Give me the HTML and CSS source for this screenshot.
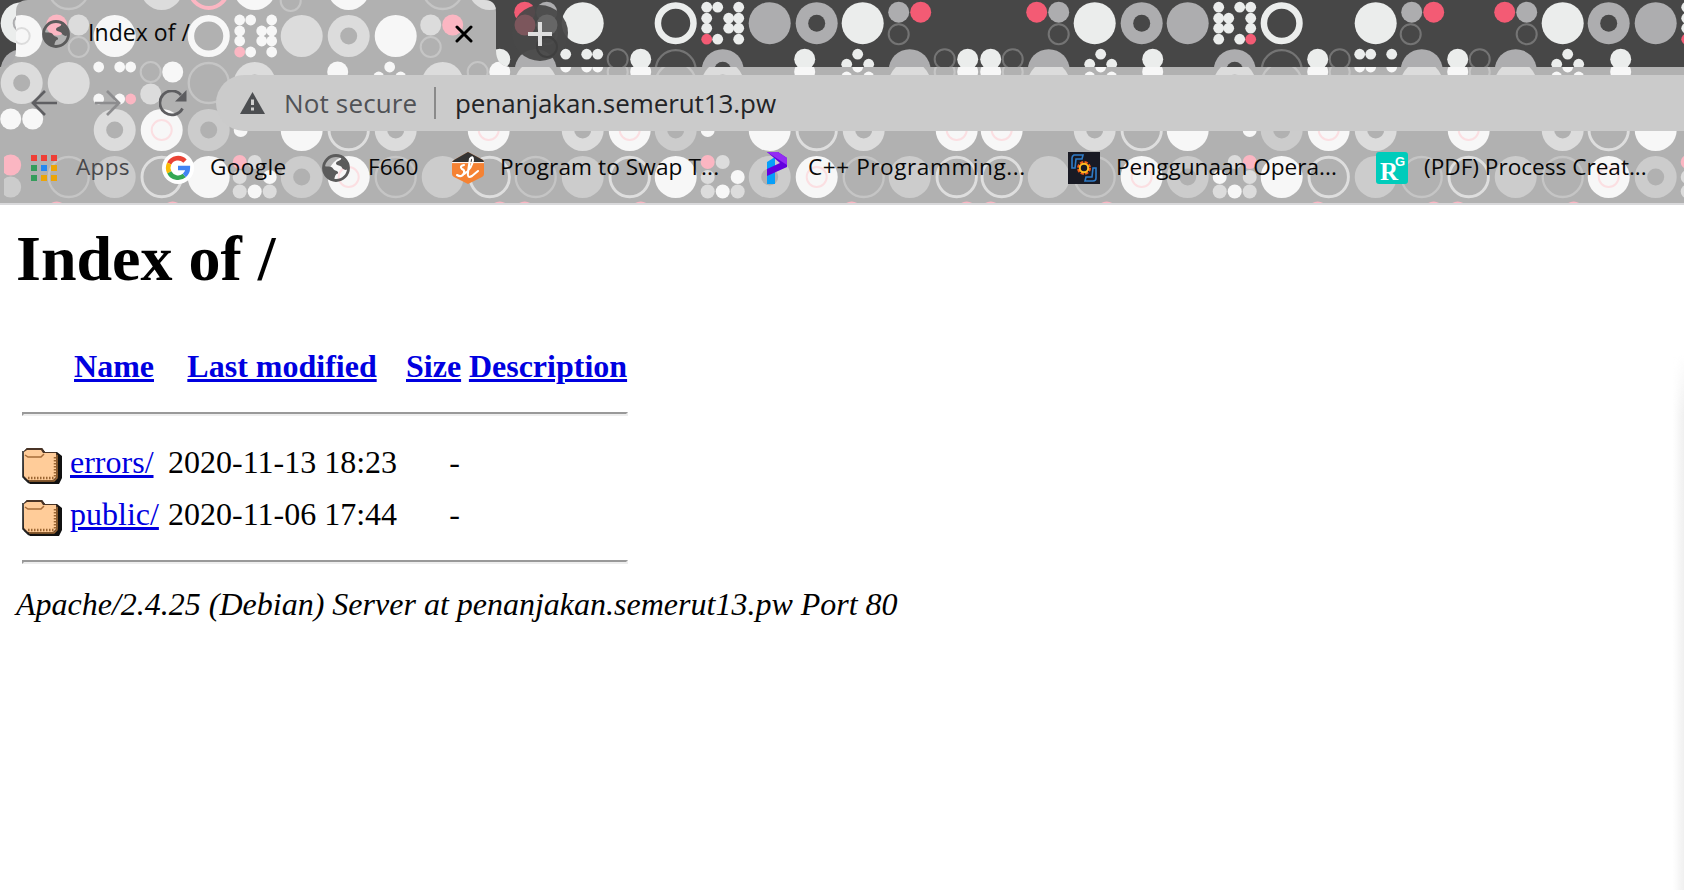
FILE: index.html
```html
<!DOCTYPE html>
<html lang="en">
<head>
<meta charset="utf-8">
<title>Index of /</title>
<link rel="stylesheet" href="styles.css">
</head>
<body>
<header class="browser">
  <svg class="theme" width="1684" height="205" viewBox="0 0 1684 205" aria-hidden="true">
    <defs>
      <clipPath id="toolbar-shape"><path d="M0 67Q16 65 16 50V12Q16 0 28 0H484Q496 0 496 12V50Q496 67 512 67H1684V203H0Z"/></clipPath>
      <clipPath id="button-shape"><circle cx="540" cy="33" r="28"/></clipPath>
    </defs>
    <rect width="1684" height="205" fill="#d9d9db"/>
    <rect width="1684" height="203" fill="#474747"/>
    <g id="frame-pattern"></g>
    <g clip-path="url(#toolbar-shape)"><rect width="1684" height="203" fill="#b1b1b1"/><g id="toolbar-pattern"></g><rect y="150" width="4" height="53" fill="#b1b1b1"/></g>
    <circle cx="540" cy="33" r="28" fill="#484848" fill-opacity=".94"/>
    <g clip-path="url(#button-shape)"><circle cx="525" cy="25" r="10.5" fill="#7c565c"/><circle cx="547" cy="25" r="10.5" fill="#666"/><circle cx="547" cy="47" r="10" fill="none" stroke="#3f3f3f" stroke-width="2"/></g>
  </svg>
  <div class="tabs">
    <div class="tab">
      <svg class="globe" viewBox="0 0 28 28"><use href="#globe"/></svg>
      <span class="tab-title">Index of /</span>
      <svg class="close" viewBox="0 0 18 18"><path d="M2 2L16 16M16 2L2 16" stroke="#000" stroke-width="3" stroke-linecap="round"/></svg>
    </div>
    <svg class="new-tab" viewBox="0 0 24 24"><path d="M12 0V24M0 12H24" stroke="#dedede" stroke-width="4"/></svg>
  </div>
  <div class="toolbar">
    <svg class="nav" viewBox="0 0 26 26" fill="none" stroke="#5f5f62" stroke-width="2.7"><path d="M26 13H2M14 1L2 13L14 25"/></svg>
    <svg class="nav forward" viewBox="0 0 26 26" fill="none" stroke="#8c8c8e" stroke-width="2.7"><path d="M0 13H24M12 1L24 13L12 25"/></svg>
    <svg class="nav reload" viewBox="0 0 28 27"><path d="M23.5 18.5A12 12 0 1 1 22 5" fill="none" stroke="#5d5d60" stroke-width="2.8"/><path d="M27.5 0V11.5H16Z" fill="#5d5d60"/></svg>
    <div class="address">
      <svg class="warning" viewBox="0 0 25 22"><path d="M12.5 0L25 22H0Z" fill="#4c4e51"/><path d="M12.5 7.5V13M12.5 15.5V18.5" stroke="#d0d0d0" stroke-width="3"/></svg>
      <span class="security">Not secure</span>
      <span class="divider"></span>
      <span class="url">penanjakan.semerut13.pw</span>
    </div>
  </div>
  <nav class="bookmarks">
    <a class="mark apps"><svg viewBox="0 0 32 32"><path d="M3 3h6v6H3zM13 3h6v6h-6zM23 3h6v6h-6z" fill="#ef3e36"/><path d="M3 13h6v6H3zM3 23h6v6H3z" fill="#349d5b"/><path d="M13 13h6v6h-6z" fill="#2488f3"/><path d="M23 13h6v6h-6zM13 23h6v6h-6zM23 23h6v6h-6z" fill="#eca407"/></svg><span>Apps</span></a>
    <a class="mark google"><svg viewBox="0 0 32 32"><circle cx="16" cy="16" r="16" fill="#fff"/><g fill="none" stroke-width="4.6"><path d="M7.2 11.6A9.8 9.8 0 0 1 23 9.1" stroke="#ea4335"/><path d="M7.3 20.4A9.8 9.8 0 0 1 7.2 11.6" stroke="#fbbc05"/><path d="M22.3 23.5A9.8 9.8 0 0 1 7.3 20.4" stroke="#34a853"/><path d="M16 16H25.8A9.8 9.8 0 0 1 22.3 23.5" stroke="#4285f4"/></g></svg><span>Google</span></a>
    <a class="mark f660"><svg viewBox="0 0 28 28"><g id="globe"><circle cx="14" cy="14" r="12.5" fill="none" stroke="#5b5b5b" stroke-width="2.8"/><path d="M19 4C20 7 14 6.500 14 9.500C14 12 20 11 20 14C22 16 25 17 26 14C26 9 23 6 19 4ZM2 12C5 13 9 11.500 11 14.500C12 17 17 16.500 16 19.500C13 20 13 23 12 26C6 25 2 20 2 12Z" fill="#5b5b5b"/></g></svg><span>F660</span></a>
    <a class="mark swap"><svg viewBox="0 0 32 32"><path d="M16 0L31 8Q32 9 32 11V22Q32 24 30 25L16 32L2 25Q0 24 0 22V11Q0 9 2 8Z" fill="#f58233"/><path d="M16 0L31 8L32 10H0L2 8Z" fill="#333"/><path d="M0 10.6H32" stroke="#fff"/><path d="M5 23Q10 26 12 21Q13 18 10 17Q7 14 12 13M12 22Q20 17 21 8Q21 3 18 7L16 20Q15 27 20 24L26 19" fill="none" stroke="#fff" stroke-width="2.1" stroke-linecap="round"/></svg><span>Program to Swap T...</span></a>
    <a class="mark cpp"><svg viewBox="0 0 32 32"><path d="M7 10L15 5V32H7Z" fill="#079ff9"/><path d="M7 0H18L27 6V15L7 24V17L20 11Z" fill="#6300df"/><path d="M7 0H18L27 6V13Z" fill="#932cf3"/></svg><span>C++ Programming...</span></a>
    <a class="mark opera"><svg viewBox="0 0 32 32"><path d="M0 0H32V32H0Z" fill="#191a24"/><g fill="none" stroke="#2f7cc8" stroke-width="1.6"><path d="M4 16V6Q4 4 6 3L15 3L14 7H8L7 16Z M28 16V26Q28 29 25 29L17 29L18 25H24L25 16Z"/></g><circle cx="16" cy="16" r="5.5" fill="none" stroke="#f15b17" stroke-width="3" stroke-dasharray="3 1.3"/><circle cx="16" cy="16" r="4.2" fill="none" stroke="#ffbd20" stroke-width="2"/></svg><span>Penggunaan Opera...</span></a>
    <a class="mark pdf"><svg viewBox="0 0 32 32"><rect width="32" height="32" rx="3" fill="#00ccbb"/><text class="rg-r" x="4" y="28">R</text><text class="rg-g" x="19" y="14">G</text></svg><span>(PDF) Process Creat...</span></a>
  </nav>
</header>
<main>
  <h1>Index of /</h1>
  <div class="listing">
    <div class="row head"><span></span><a href="#" class="name">Name</a><a href="#" class="modified">Last modified</a><a href="#" class="size">Size</a><a href="#" class="desc">Description</a></div>
    <hr>
    <div class="row entry"><svg class="folder" viewBox="0 0 40 44"><g id="folder"><path d="M2 8L5 5H20L23 9H35L40 13V35L37 41H8L2 36Z" fill="#111"/><path d="M2 8L5 5H20L23 9H34L36 12V33L33 38H6L1 34Z" fill="#4a3426"/><path d="M2 9L5 7H19L21 10H34V34L31 37H6L2 33Z" fill="#ffcc99"/><path d="M3 12L6 14H19L22 11" fill="none" stroke="#a76c39" stroke-width="1.5"/><path d="M33 14V35" stroke="#9b6532" stroke-width="2.5" stroke-dasharray="1.5 1.5"/><path d="M6 35H33" stroke="#9b6532" stroke-width="2.5" stroke-dasharray="1.5 1.5"/><path d="M35 12V35L32 38H7" fill="none" stroke="#9b6532" stroke-width="1.5"/><path d="M1 8V34L7 40" fill="none" stroke="#222" stroke-width="1.6"/></g></svg><a href="#">errors/</a><span class="date">2020-11-13 18:23</span><span class="dash">-</span></div>
    <div class="row entry"><svg class="folder" viewBox="0 0 40 44"><use href="#folder"/></svg><a href="#">public/</a><span class="date">2020-11-06 17:44</span><span class="dash">-</span></div>
    <hr class="last">
  </div>
  <address>Apache/2.4.25 (Debian) Server at penanjakan.semerut13.pw Port 80</address>
  <div class="edge-shadow"></div>
</main>
<script src="theme.js"></script>
</body>
</html>
```
FILE: theme.js
```js
const light = { white: '#f7f7f7', gray: '#dcdcdc', dim: '#cccccc', pink: '#fbb6c2', blush: '#fbdfe2', bg: '#b1b1b1', ring: '#c5c5c5', bright: '#dedede' };
const dark = { white: '#ebedec', gray: '#adadaf', dim: '#999', pink: '#f35b74', blush: '#aaa', bg: '#474747', ring: '#747474', bright: '#aaa' };

// Each entry: motif name followed by its column centre.
const rows = [
  [-11, 'O69 G162 K209 W255 G490 O443 W349 r291,12'],
  [36, 'S22 p57,-11 g79,-11 r79,11 W115 R209 M256 G302 D349 W396 g431,-11 p453,-11 r431,11 p525,-11 g547,-11 r547,11 W583 R676 M723 G770 D817 W863 g899,-11 p921,-11 r899,11 p1037,-11 g1059,-11 r1059,11 W1095 D1142 G1188 N1235 R1282 W1376 g1412,-11 p1434,-11 r1411,11 p1505,-11 g1527,-11 r1527,11 W1563 D1609 G1656 M1703'],
  [83, 'D22 G69 C115 r151,-11 w173,-11 g151,11 O209 D255 w338,-11 V390 G443 r478,-11 w500,-11 G536 C582 r618,-11 w641,-11 O676 D723 w805,-11 V858 G910 r945,-11 w968,-11 w991,-11 r1013,-11 G1049 V1101 w1153,-11 D1235 O1282 w1318,-11 r1340,-11 E1376 G1422 w1458,-11 r1480,-11 G1516 V1568 w1621,-11'],
  [130, 'w11,-11 w33,-11 D115 P162 d209 t241,0 W302 o349 D396 P489 D583 P630 d676 t708,0 W770 o817 D864 P957 P1002 D1095 o1142 W1188 t1250,0 d1282 P1329 D1376 P1469 D1563 o1609 W1656'],
  [177, 'p11,-12 e11,10 O69 L115 o162 W209 Q255 d302 P349 O396 L443 o490 O536 L583 o630 W676 Q723 d770 P817 O864 L910 o957 o1002 L1049 O1095 P1142 d1188 U1235 W1282 o1329 L1376 O1422 o1469 L1516 O1563 P1609 d1656 Q1703'],
  [224, 'p57,-12 p173,-12 p500,-12 p525,-12 p641,-12 p852,-12 p967,-12 p991,-12 p1107,-12 p1318,-12 p1434,-12 p1458,-12 p1574,-12 L22 L115 L583 L1049 L1376']
];

const disc = (x, y, r, fill) => `<circle cx="${x}" cy="${y}" r="${r}" fill="${fill}"/>`;
const ring = (x, y, r, stroke, w) => `<circle cx="${x}" cy="${y}" r="${r}" fill="none" stroke="${stroke}" stroke-width="${w}"/>`;

function motif(kind, x, y, dy, c) {
  const dots = (list, flip = 1) => list.map(([a, b, k = 'white', r = 5.4]) => disc(x + a * flip, y + b, r, c[k])).join('');
  const maze = [[-16, -16], [-5, -16], [16, -16], [-16, -5], [6, -5], [16, -5], [-16, 5], [6, 5], [16, 5], [-16, 16, 'pink'], [-5, 16], [16, 16]];
  const corner = [[-16, -16], [5, -16], [16, -16], [-16, 16], [5, 16], [16, 16, 'pink']];
  const nine = [[-15, -15, 'pink', 7], [0, -15, 'gray', 7], [-15, 0, 'gray', 7], [15, 0, 'white', 7], [-15, 14.5, 'gray', 7], [0, 14.5, 'white', 7], [15, 14.5, 'gray', 7]];
  switch (kind) {
    case 'W': return disc(x, y, 21, c.white);
    case 'G': return disc(x, y, 21, c.gray);
    case 'L': return disc(x, y, 21, c.dim);
    case 'D': return disc(x, y, 21, c.gray) + disc(x, y, 8.5, c.bg);
    case 'd': return disc(x, y, 21, c.dim) + disc(x, y, 8.5, c.bg);
    case 'R': return ring(x, y, 17.8, c.white, 6.5);
    case 'K': return ring(x, y, 19, c.pink, 4);
    case 'O': return ring(x, y, 20, c.ring, 2.3);
    case 'o': return ring(x, y, 19.7, c.bright, 2.9);
    case 'P': return disc(x, y, 21, c.white) + ring(x, y, 10, c.blush, 2);
    case 'S': return disc(x, y, 21, c.white) + ring(x, y, 8, c.gray, 2);
    case 'M': return dots(maze);
    case 'N': return dots(maze, -1);
    case 'C': return dots(corner);
    case 'E': return dots(corner, -1);
    case 'V': return dots([[0, -16], [-11, -6], [11, -6]]);
    case 'Q': return dots(nine);
    case 'U': return dots(nine, -1);
    case 'w': return disc(x, y + dy, 10.5, c.white);
    case 'g': return disc(x, y + dy, 10.5, c.gray);
    case 'e': return disc(x, y + dy, 10.5, c.dim);
    case 'p': return disc(x, y + dy, 10.5, c.pink);
    case 't': return disc(x, y + dy, 7, c.white);
    case 'r': return ring(x, y + dy, 10, c.ring, 2.1);
  }
  return '';
}

function paint(id, list, shift, colors) {
  document.getElementById(id).innerHTML = list.map(([y, items]) => items.split(' ').map(item => {
    const [x, dy = 0] = item.slice(1).split(',').map(Number);
    return motif(item[0], x - 0.3, y + shift, dy, colors);
  }).join('')).join('');
}

paint('frame-pattern', rows.slice(1, 3), -12.8, dark);
paint('toolbar-pattern', rows, 0, light);
```
FILE: styles.css
```css
* { box-sizing: border-box; }
body { margin: 0; width: 1684px; height: 890px; overflow: hidden; background: #fff; }
.browser { position: relative; height: 205px; font-family: "Open Sans", "Noto Sans", sans-serif; color: #080808; }
.theme { position: absolute; left: 0; top: 0; }
.tabs, .toolbar, .bookmarks { position: relative; display: flex; align-items: center; white-space: nowrap; }
.tabs { height: 67px; }
.tab { display: flex; align-items: center; width: 496px; height: 67px; padding: 0 23px 0 42px; }
.globe { width: 28px; height: 28px; }
.tab-title { margin-left: 18px; padding-bottom: 3px; font-size: 23px; letter-spacing: .05px; line-height: 32px; }
.close { width: 18px; height: 18px; margin-left: auto; }
.new-tab { width: 24px; height: 24px; margin-left: 32px; }
.toolbar { height: 72px; padding-left: 31px; }
.nav { width: 26px; height: 26px; }
.forward { margin-left: 38px; }
.reload { width: 28px; height: 27px; margin-left: 38px; }
.address { display: flex; align-items: center; width: 1468px; height: 56px; margin-left: 29px; padding-left: 24px; background: #cbcbcb; border-radius: 28px 0 0 28px; font-size: 26px; }
.warning { width: 25px; height: 22px; }
.security { width: 133px; margin-left: 19px; letter-spacing: .15px; color: #505256; }
.divider { width: 2px; height: 32px; margin-left: 17px; background: #8a8a8a; }
.url { margin-left: 19px; letter-spacing: -.08px; color: #232427; }
.bookmarks { height: 57px; font-size: 22.6px; }
.mark { display: flex; align-items: center; flex: none; }
.mark svg { width: 32px; height: 32px; flex: none; }
.mark span { margin-left: 16px; padding-bottom: 2px; }
.apps { width: 134px; padding-left: 28px; color: #48484b; letter-spacing: .3px; }
.google { width: 160px; padding-left: 28px; letter-spacing: .4px; }
.f660 { width: 158px; padding-left: 28px; }
.mark.f660 svg { width: 28px; height: 28px; }
.mark.f660 span { margin-left: 18px; }
.swap { width: 308px; letter-spacing: .1px; }
.cpp { width: 308px; letter-spacing: .55px; }
.opera { width: 308px; }
.rg-r { font: bold 25px "Liberation Serif", serif; fill: #fff; }
.rg-g { font: bold 13px "Liberation Sans", sans-serif; fill: #fff; }
main { position: relative; height: 685px; padding: 16px 16px 0; font-family: "Liberation Serif", serif; font-size: 32px; color: #000; }
h1 { margin: 1px 0 0; font-size: 64px; line-height: 74px; font-weight: bold; }
.listing { width: 606px; margin: 48px 0 0 6px; }
.row { display: grid; grid-template-columns: 40px 90px 230px 54px 160px; column-gap: 8px; align-items: center; height: 52px; line-height: 36px; white-space: nowrap; }
.row a { color: #0000e0; text-decoration-thickness: 3px; }
.entry a, .entry span { padding-bottom: 7px; }
.head { height: 44px; font-weight: bold; text-align: center; }
.head .name, .head .modified { padding-right: 2px; }
.dash { text-align: right; }
hr { margin: 24px 0 23px; border: 2px solid; border-color: #999 #eee #eee #999; }
.last { margin: 17px 0 0; }
.folder { width: 40px; height: 44px; }
address { margin-top: 22px; line-height: 37px; white-space: nowrap; }
.edge-shadow { position: absolute; right: 0; top: 150px; width: 11px; bottom: 0; background: linear-gradient(to right, #fff0, #f0f0f0); mask-image: linear-gradient(#0000, #000 60px); }
```
